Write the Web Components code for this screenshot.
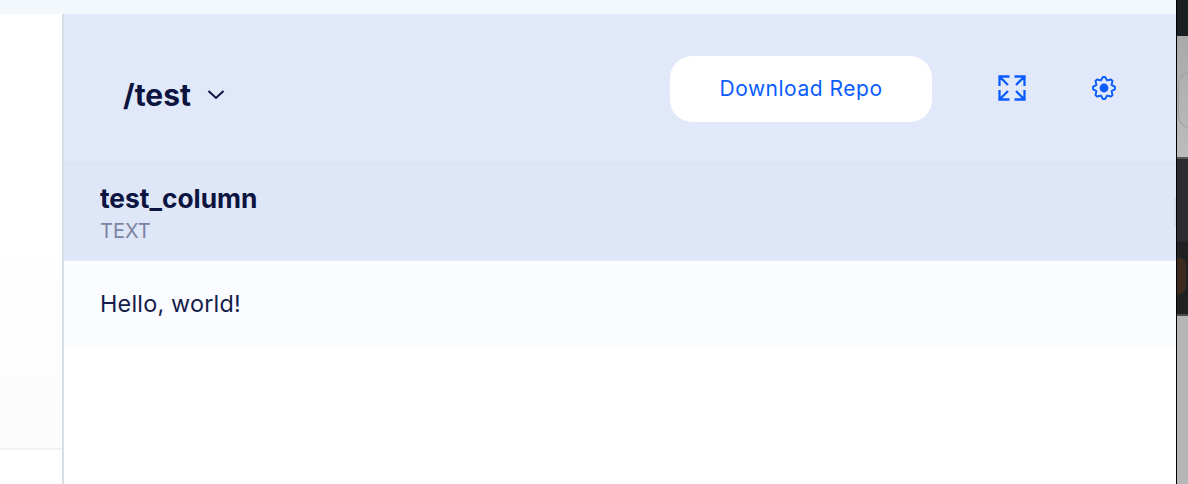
<!DOCTYPE html>
<html><head><meta charset="utf-8">
<style>
html,body{margin:0;padding:0;height:100%;overflow:hidden;background:#fff}
body{font-family:Inter,"Liberation Sans",sans-serif}
</style></head>
<body>
<app-shell></app-shell>
<script>
function def(name,css,html){
  customElements.define(name,class extends HTMLElement{
    constructor(){super();const r=this.attachShadow({mode:'open'});r.innerHTML='<style>'+css+'</style>'+html;}
  });
}
function gear(){
  let d='',c=12,ro=11,ri=8.2,n=8;
  const p=(r,a)=>(c+r*Math.sin(a)).toFixed(2)+' '+(c-r*Math.cos(a)).toFixed(2);
  for(let i=0;i<n;i++){
    const a=i*2*Math.PI/n,s=Math.PI/n;
    d+=(i?'L':'M')+p(ro,a-s*.25)+'L'+p(ro,a+s*.25)+'L'+p(ri,a+s);
  }
  return d+'Z';
}
def('side-panel',`:host{display:flex;flex-direction:column;width:62px;flex:none;border-right:2px solid #d8dee5;background:#fff}
.a{height:436px;flex:none;background:linear-gradient(#fff,#fff 50%,#fcfcfc);border-bottom:2px solid #f0f1f2;box-sizing:border-box}
`,`<div class="a"></div>`);
def('repo-header',`:host{display:flex;align-items:center;height:150px;box-sizing:border-box;border-bottom:1px solid #d9e1f2;background:#e1e8f9;padding:0 0 0 59px;flex:none}
.title{font:700 30px/36px Inter,sans-serif;color:#0c1440;display:flex;align-items:center;margin-top:13px}
.title svg{margin-left:15px;display:block}
.spacer{flex:1}
button{all:unset;box-sizing:border-box;width:262px;height:66px;background:#fff;border-radius:22px;color:#0a5cff;font:400 21px/64px Inter,sans-serif;letter-spacing:.52px;text-align:center}
.ic{display:block;flex:none;margin-top:-3px}
.i1{margin-left:66px}
.i2{margin-left:66px;margin-right:60px}
.wrap{display:flex;align-items:center;margin-top:1px}
`,`<div class="title">/test<svg width="20" height="12" viewBox="0 0 20 12" fill="none" stroke="#0c1440" stroke-width="2"><path d="M2.500 2 10 9 17.500 2"/></svg></div>
<div class="spacer"></div>
<div class="wrap"><button>Download Repo</button>
<svg class="ic i1" width="28" height="26" viewBox="0 0 28 26" fill="none" stroke="#0a5cff" stroke-width="2.300"><path d="M1.500 11V1.500H11.500M1.500 1.500l8.500 8.500M26.500 11V1.500H16.500M26.500 1.500l-8.500 8.500M1.500 15v9.500H11.500M1.500 24.500l8.500-8.500M26.500 15v9.500H16.500M26.500 24.500l-8.500-8.500"/></svg>
<svg class="ic i2" width="24" height="24" viewBox="0 0 24 24"><path fill="none" stroke="#0a5cff" stroke-width="1.900" stroke-linejoin="round" d="${gear()}"/><circle cx="12" cy="12" r="4.400" fill="#0a5cff"/></svg></div>`);
def('col-header',`:host{display:flex;flex-direction:column;height:97px;box-sizing:border-box;background:#dfe6f7;padding:20px 0 0 36px;border-bottom:1px solid #e6ecf8;flex:none;position:relative}
.n{font:700 26.300px/30px Inter,sans-serif;color:#0c1440}
.t{font:400 20px/24px Inter,sans-serif;color:#7c84a3;margin-top:5px}
.notch{position:absolute;right:0;top:34px;width:2px;height:28px;background:#d5dae8}
`,`<div class="n"><slot name="n"></slot></div><div class="t"><slot name="t"></slot></div><div class="notch"></div>`);
def('data-row',`:host{display:flex;align-items:center;height:85px;box-sizing:border-box;background:#fafcff;padding:0 0 0 36px;font:400 23.400px/30px Inter,sans-serif;letter-spacing:.2px;color:#161d4a;flex:none}`,`<slot></slot>`);
def('right-strip',`:host{display:flex;flex-direction:column;width:11px;flex:none;border-left:1px solid #000;margin-top:-14px;height:484px;background:#b5b5b5;position:relative}
.a{height:36px;background:#1b2025;flex:none}
.b{height:121px;flex:none;background:linear-gradient(#a9a9a9,#bcbcbc);position:relative;overflow:hidden;border-bottom:2px solid #555;box-sizing:content-box}
.b i{position:absolute;left:1px;top:36px;width:30px;height:54px;border:1px solid #9a9a9a;border-radius:12px}
.c{height:83px;background:#2b2c2f;flex:none}
.d{height:72px;background:#1e2022;position:relative;overflow:hidden;flex:none}
.d i{position:absolute;left:0;top:16px;width:9px;height:37px;background:#3d2a1e;border-radius:0 8px 12px 0}
.e{height:2px;background:#4d4d4d;flex:none}
.f{flex:1;background:#b6b6b6}
`,`<div class="a"></div><div class="b"><i></i></div><div class="c"></div><div class="d"><i></i></div><div class="e"></div><div class="f"></div>`);
def('app-shell',`:host{display:flex;flex-direction:column;height:484px;width:1188px;overflow:hidden}
.top{height:14px;flex:none;background:#f2f7fb;margin-right:11px}
.row{display:flex;flex:1;min-height:0}
main{flex:1;display:flex;flex-direction:column;min-width:0;background:#fff}
`,`<div class="top"></div><div class="row"><side-panel></side-panel><main><repo-header></repo-header><col-header><span slot="n">test_column</span><span slot="t">TEXT</span></col-header><data-row>Hello, world!</data-row></main><right-strip></right-strip></div>`);
</script>
</body></html>
